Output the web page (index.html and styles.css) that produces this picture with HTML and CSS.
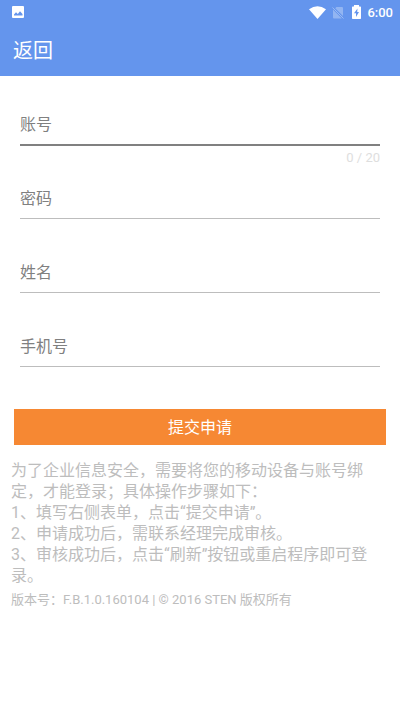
FILE: index.html
```html
<!DOCTYPE html>
<html lang="zh-CN">
<head>
<meta charset="utf-8">
<meta name="viewport" content="width=device-width, initial-scale=1">
<title>提交申请</title>
<link rel="stylesheet" href="styles.css">
</head>
<body>
<header class="top">
  <div class="status">
    <svg class="status-picture" width="12" height="12" viewBox="0 0 12 12" aria-hidden="true"><path fill="#fff" fill-rule="evenodd" d="M1 0h10a1 1 0 0 1 1 1v10a1 1 0 0 1-1 1H1a1 1 0 0 1-1-1V1a1 1 0 0 1 1-1zM2 9.500h8.500V8L8 5.200 5.800 8 4 6.300 2 8.500z"/></svg>
    <svg class="status-wifi" width="17" height="13" viewBox="0 0 17 13" aria-hidden="true"><path fill="#fff" d="M0 3.300Q8.500-2.700 17 3.300L8.500 13z"/></svg>
    <svg class="status-sim" width="12" height="13" viewBox="0 0 12 13" aria-hidden="true"><path fill="#fff" fill-opacity=".3" d="M4.500 1H10a1 1 0 0 1 1 1v8L3.200 2.300zM1 3.500L9.800 12.500H2a1 1 0 0 1-1-1z"/><path fill="none" stroke="#fff" stroke-opacity=".35" d="M.500 1.500l11 11"/></svg>
    <svg class="status-battery" width="9" height="14" viewBox="0 0 9 14" aria-hidden="true"><path fill="#fff" fill-rule="evenodd" d="M2 0h5v1.500h1.300a.7.700 0 0 1 .7.700v11.100a.7.700 0 0 1-.7.700H.7a.7.700 0 0 1-.7-.7V2.200a.7.700 0 0 1 .7-.7H2zM5.500 3.500L2 8.200h2V12l3-5H5.200z"/></svg>
    <time class="status-time">6:00</time>
  </div>
  <nav class="bar"><a class="back" href="#">返回</a></nav>
</header>
<main>
  <form class="form">
    <div class="field field-active">
      <input class="input" type="text" maxlength="20" placeholder="账号" aria-label="账号">
      <output class="counter">0 / 20</output>
    </div>
    <div class="field"><input class="input" type="password" placeholder="密码" aria-label="密码"></div>
    <div class="field"><input class="input" type="text" placeholder="姓名" aria-label="姓名"></div>
    <div class="field"><input class="input" type="tel" placeholder="手机号" aria-label="手机号"></div>
    <button class="submit" type="button">提交申请</button>
  </form>
  <section class="notes">
    <p>为了企业信息安全，需要将您的移动设备与账号绑定，才能登录；具体操作步骤如下：</p>
    <p>1、填写右侧表单，点击“提交申请”。</p>
    <p>2、申请成功后，需联系经理完成审核。</p>
    <p>3、审核成功后，点击“刷新”按钮或重启程序即可登录。</p>
    <p class="version">版本号：F.B.1.0.160104 | © 2016 STEN 版权所有</p>
  </section>
</main>
</body>
</html>
```

FILE: styles.css
```css
* {
  box-sizing: border-box;
}

body {
  margin: 0;
  background: #fff;
  font-family: Roboto, "Noto Sans CJK SC", sans-serif;
  font-size: 16px;
}

.top {
  background: #6495ed;
  color: #fff;
}

.status {
  display: flex;
  align-items: center;
  height: 24px;
  padding: 0 7px 0 12px;
}

.status-picture {
  margin-right: auto;
}

.status-sim {
  margin: 0 8px 0 6px;
}

.status-time {
  margin-left: 6px;
  font-size: 13px;
  font-weight: 500;
}

.bar {
  display: flex;
  align-items: center;
  height: 52px;
  padding: 0 13px 2px;
}

.back {
  color: inherit;
  font-size: 20px;
  text-decoration: none;
}

.form {
  padding: 26px 14px 0;
}

.field {
  height: 74px;
  padding: 0 6px;
}

.input {
  display: block;
  width: 100%;
  height: 43px;
  padding: 2px 0 0;
  border: 0;
  border-bottom: 1px solid #bdbdbd;
  border-radius: 0;
  outline: 0;
  background: none;
  color: #333;
  font: inherit;
}

.input::placeholder {
  color: #808080;
  opacity: 1;
}

.field-active .input {
  height: 44px;
  border-bottom: 2px solid #808080;
}

.counter {
  display: block;
  color: #dedede;
  font-size: 13px;
  line-height: 24px;
  text-align: right;
}

.submit {
  display: block;
  width: 100%;
  height: 36px;
  margin-top: 11px;
  padding: 0 0 2px;
  border: 0;
  background: #f68833;
  color: #fff;
  font: inherit;
}

.notes {
  padding: 15px 11px;
  color: #bdbdbd;
  line-height: 21px;
}

.notes p {
  margin: 0;
}

.notes .version {
  margin-top: 3px;
  font-size: 13px;
}
```
